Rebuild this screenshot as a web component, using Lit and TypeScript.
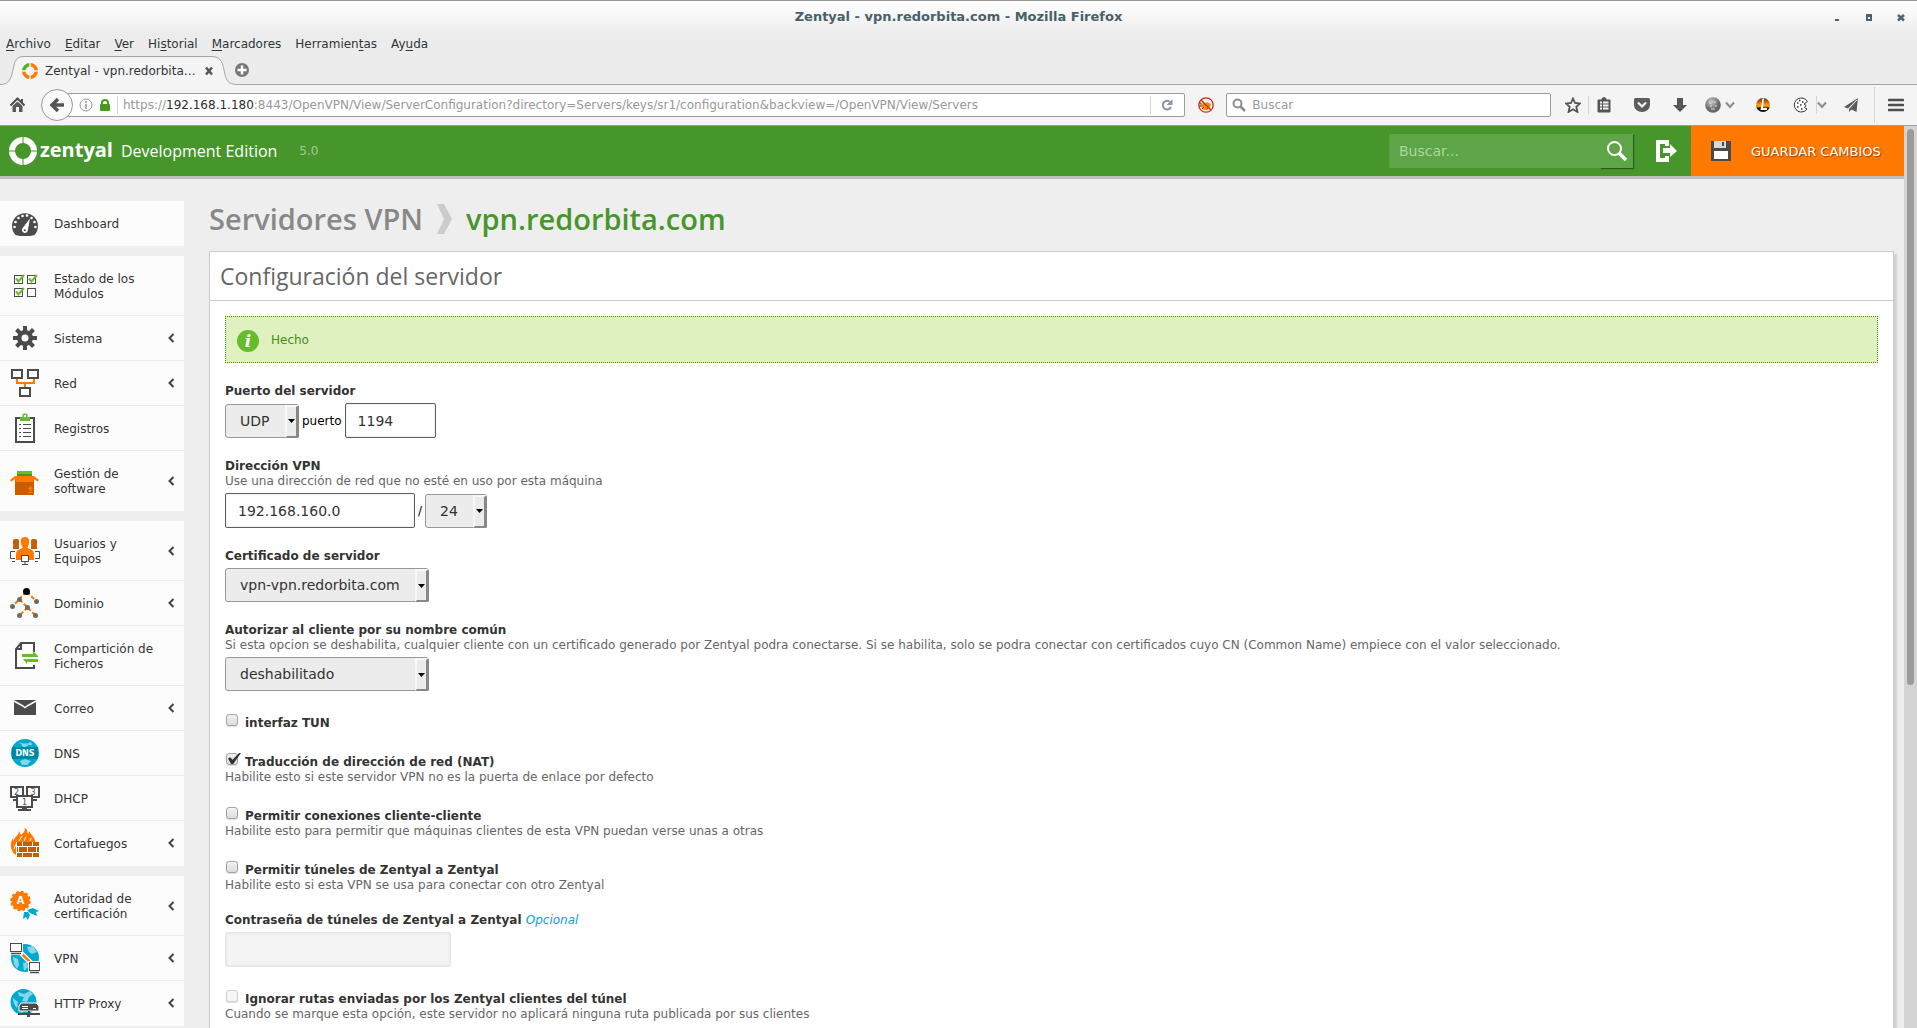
import { LitElement, html, svg, css, nothing, TemplateResult } from "lit";
import { customElement } from "lit/decorators.js";

const DARK = "#4b4b4b";
const ORANGE = "#ff7800";
const RUST = "#c65d00";
const GREEN = "#66bc29";
const CYAN = "#00a9d0";
const PALE = "#86d6ea";

/* Sidebar icons, all drawn on a 30x30 canvas. */
const icons: Record<string, TemplateResult> = {
  dashboard: svg`
    <path d="M5.500 27A13 13 0 1 1 24.500 27L20 28H10Z" fill=${DARK}/>
    <g fill="#fff">
      <circle cx="4.500" cy="19" r="1.300"/><circle cx="5.500" cy="14" r="1.300"/><circle cx="8.500" cy="10" r="1.300"/>
      <circle cx="12.500" cy="8" r="1.300"/><circle cx="17" cy="7.600" r="1.300"/><circle cx="21.500" cy="10" r="1.300"/>
      <circle cx="24.500" cy="14" r="1.300"/><circle cx="25.500" cy="19" r="1.300"/>
      <path d="M20 10.500L17.800 22.500A3 3 0 1 1 12.200 20.500Z"/>
    </g>
    <circle cx="14.900" cy="22.300" r="1" fill=${DARK}/>`,
  modules: svg`
    <g fill="none" stroke=${DARK}>
      <rect x="4.500" y="4.500" width="8" height="8"/><rect x="17.500" y="4.500" width="8" height="8"/>
      <rect x="4.500" y="17.500" width="8" height="8"/><rect x="17.500" y="17.500" width="8" height="8"/>
    </g>
    <g fill="none" stroke=${GREEN} stroke-width="2">
      <path d="M6 7.500L8.500 10.500L14 4"/><path d="M19 7.500L21.500 10.500L27 4"/><path d="M6 20.500L8.500 23.500L14 17"/>
    </g>`,
  gear: svg`
    <g stroke=${DARK} stroke-width="4">
      <path d="M15 3V27M3 15H27M6.500 6.500L23.500 23.500M23.500 6.500L6.500 23.500"/>
    </g>
    <circle cx="15" cy="15" r="8" fill=${DARK}/><circle cx="15" cy="15" r="3.500" fill="#fcfcfc"/>`,
  network: svg`
    <path d="M7 11V15H24V11M15 15V19" fill="none" stroke=${ORANGE} stroke-width="2"/>
    <g fill="#fff" stroke=${DARK} stroke-width="2">
      <rect x="2" y="2" width="10" height="8"/><rect x="18" y="2" width="10" height="8"/><rect x="10" y="20" width="10" height="8"/>
    </g>`,
  logs: svg`
    <rect x="6" y="5" width="18" height="24" fill="#fff" stroke=${DARK} stroke-width="2"/>
    <path d="M10 8V4H12.500V1.500Q15 -1 17.500 1.500V4H20V8Z" fill=${GREEN}/>
    <circle cx="15" cy="3" r="1.200" fill="#fff"/>
    <g stroke=${DARK}>
      <path d="M9 11.500H11M13 11.500H21M9 15.500H11M13 15.500H21M9 19.500H11M13 19.500H21M9 23.500H11M13 23.500H21"/>
    </g>`,
  software: svg`
    <rect x="7" y="5" width="15" height="6" fill=${GREEN}/><rect x="7" y="8" width="15" height="2" fill="#479530"/>
    <rect x="5" y="11" width="19" height="18" fill=${RUST}/>
    <path d="M5 10H24L29 14L27.500 15.500L24 13L23 16H6L5 13L1.500 15.500L0 14Z" fill=${ORANGE}/>
    <path d="M20.500 20L23.500 23H21.500V25H19.500V23H17.500ZM18 26H23V27H18Z" fill=${ORANGE}/>`,
  users: svg`
    <g fill=${RUST}>
      <path d="M4 6H8L9 11V13H3V11ZM22 6H26L27 11V13H21V11Z"/>
      <rect x="3" y="3" width="6" height="7" rx="2"/><rect x="21" y="3" width="6" height="7" rx="2"/>
    </g>
    <path d="M15 1C11 1 10.500 4 11 7C11.500 10 12.500 10.500 12.500 12L8 14Q6 15 6 19V24H24V19Q24 15 22 14L17.500 12C17.500 10.500 18.500 10 19 7C19.500 4 19 1 15 1Z" fill=${ORANGE}/>
    <g fill="#fff" stroke=${DARK}>
      <path d="M5 15.500H0.500V22.500H5M2 25.500H5"/><path d="M25 15.500H29.500V22.500H25M25 25.500H28"/>
      <rect x="11.500" y="19.500" width="7" height="6"/><path d="M12 28.500H18M15 26V28"/>
    </g>`,
  domain: svg`
    <g stroke=${ORANGE} stroke-width="2" stroke-dasharray="4 2">
      <path d="M16 4L2.500 18.500M17 4L26.500 13.500M9.500 11.500L25.500 27.500M17.500 19.500L9.500 27.500"/>
    </g>
    <circle cx="16.500" cy="3.500" r="3.500"/>
    <g fill="#6b6b6b">
      <circle cx="9.500" cy="11.500" r="2.500"/><circle cx="26.500" cy="13.500" r="2.500"/><circle cx="2.500" cy="18.500" r="2.500"/>
      <circle cx="17.500" cy="19.500" r="2.500"/><circle cx="9.500" cy="27.500" r="2.500"/><circle cx="25.500" cy="27.500" r="2.500"/>
    </g>`,
  share: svg`
    <path d="M24 11V2H11L6 8V27H24V24M11 2V8H6" fill="#fff" stroke=${DARK} stroke-width="2"/>
    <path d="M12 13H23V10L28 15V16H12ZM28 18H13L17 23V21H28Z" fill=${GREEN}/>`,
  mail: svg`
    <path d="M4 7H26V22H4Z" fill=${DARK}/>
    <path d="M4 8L12 12.500L15 14.500L18 12.500L26 8" fill="none" stroke="#fcfcfc" stroke-width="1.500"/>`,
  dns: svg`
    <circle cx="15" cy="15" r="14" fill=${CYAN}/>
    <path d="M9 4Q15 7 21 4L22 7H18L16 9H13L11 6ZM10 23L15 21L21 23L17 27H12Z" fill=${PALE}/>
    <rect x="2" y="9" width="26" height="12" fill="#0087a8"/>
    <text x="15" y="18" text-anchor="middle" font-family="DejaVu Sans" font-size="8" font-weight="bold" fill="#fff">DNS</text>`,
  dhcp: svg`
    <g fill="#fff" stroke=${DARK} stroke-width="2">
      <rect x="1" y="4" width="12" height="10"/><rect x="17" y="4" width="12" height="10"/>
      <path d="M3 17H8M22 17H27"/>
      <rect x="7" y="13" width="15" height="11"/>
    </g>
    <path d="M12 25H17V26H21V28H8V26H12Z" fill=${DARK}/>
    <g font-family="DejaVu Sans" font-size="8" fill=${DARK} text-anchor="middle">
      <text x="6.500" y="11.500">2</text><text x="23" y="11.500">3</text><text x="14.500" y="21.500">1</text>
    </g>`,
  firewall: svg`
    <path d="M4 26C0 20 0 15 3 10L3.500 13C5 8 9 7 9 3L11 7L13 5C15 3 15 2 14.500 0C18 1 17 4 18 6L20 3C20 7 26 9 25 15H7V27Z" fill=${ORANGE}/>
    <path d="M9 13L12 8M14 13L16 9M20 13L21 10M4 21L6 16" stroke="#fff"/>
    <rect x="6" y="14" width="23" height="16" fill="#fcfcfc"/>
    <path d="M7 14H12V18H7ZM13 14H22V18H13ZM23 14H29V18H23ZM7 19H8V24H7ZM9 19H17V24H9ZM18 19H26V24H18ZM27 19H29V24H27ZM7 25H12V29H7ZM13 25H22V29H13ZM23 25H29V29H23Z" fill=${RUST}/>`,
  certificate: svg`
    <path d="M17 19L23 17L29 20L26 21L27 25L20 22ZM14 21L18 21L20 24L18 29L16 26L13 28Z" fill=${CYAN}/>
    <circle cx="10.500" cy="10" r="9" fill=${ORANGE}/>
    <circle cx="10.500" cy="10" r="9" fill="none" stroke=${ORANGE} stroke-width="2.500" stroke-dasharray="2.900 1.800"/>
    <text x="10.500" y="13" text-anchor="middle" font-family="DejaVu Sans" font-size="10" font-weight="bold" fill="#fff">A</text>`,
  vpn: svg`
    <circle cx="15" cy="15" r="14" fill=${CYAN}/>
    <path d="M17 4L23 3L27 9L22 11L19 9ZM3 14L8 16L9 22L7 26Q3 21 3 14ZM13 20L17 19L18 24L14 28Z" fill=${PALE}/>
    <path d="M9 8L22 21" stroke="#fff" stroke-width="5"/><path d="M9 8L22 21" stroke=${ORANGE} stroke-width="2.500"/>
    <path d="M0 0H13V12H0ZM18 18H30V30H18Z" fill="#fcfcfc"/>
    <g fill="#fff" stroke=${DARK}>
      <rect x="0.500" y="0.500" width="11" height="8"/><rect x="19.500" y="19.500" width="10" height="8"/>
      <path d="M1 10.500H11M20 29.500H29" stroke-width="1.500"/>
    </g>`,
  proxy: svg`
    <circle cx="13.500" cy="14" r="13" fill=${CYAN}/>
    <path d="M8 4L14 6L20 3L23 6L19 9L17 14L12 13L14 9L9 8ZM3 10L8 14L7 20Q3 16 3 10ZM9 21L14 20L12 26Z" fill=${PALE}/>
    <path d="M11 15H26L29 18V23H9V18Z" fill=${DARK} stroke="#fff"/>
    <path d="M12 18.500H18M12 20.500H18M23 20.500H26" stroke="#fff"/>
    <path d="M18 23H20V25H30V27H20V29H17V27H8V25H18Z" fill=${DARK}/>`,
};

interface NavEntry { icon: string; label: string; sub?: boolean; }

const navGroups: NavEntry[][] = [
  [{ icon: "dashboard", label: "Dashboard" }],
  [
    { icon: "modules", label: "Estado de los Módulos" },
    { icon: "gear", label: "Sistema", sub: true },
    { icon: "network", label: "Red", sub: true },
    { icon: "logs", label: "Registros" },
    { icon: "software", label: "Gestión de software", sub: true },
  ],
  [
    { icon: "users", label: "Usuarios y Equipos", sub: true },
    { icon: "domain", label: "Dominio", sub: true },
    { icon: "share", label: "Compartición de Ficheros" },
    { icon: "mail", label: "Correo", sub: true },
    { icon: "dns", label: "DNS" },
    { icon: "dhcp", label: "DHCP" },
    { icon: "firewall", label: "Cortafuegos", sub: true },
  ],
  [
    { icon: "certificate", label: "Autoridad de certificación", sub: true },
    { icon: "vpn", label: "VPN", sub: true },
    { icon: "proxy", label: "HTTP Proxy", sub: true },
  ],
];

/* The four-segment ring of the Zentyal logo; the top left segment may differ in colour. */
const ring = (top: string, rest: string) => svg`
  <g fill="none" stroke-width="6">
    <path d="M15 4A11 11 0 0 1 26 15A11 11 0 0 1 15 26A11 11 0 0 1 4 15" stroke=${rest}/>
    <path d="M4 15A11 11 0 0 1 15 4" stroke=${top}/>
  </g>`;

/* ------------------------------------------------------------------ */

@customElement("browser-chrome")
class BrowserChrome extends LitElement {
  static styles = css`
    :host { display: block; font: 12px/15px "DejaVu Sans", sans-serif; color: #2f3639; }
    button { border: 0; padding: 0; margin: 0; background: none; font: inherit; color: inherit; display: flex; align-items: center; justify-content: center; }
    svg { display: block; flex: none; }
    .titlebar {
      height: 34px; box-sizing: border-box; border-top: 1px solid #979797;
      background: linear-gradient(#ffffff, #ececec);
      display: grid; grid-template-columns: 1fr auto 1fr; align-items: center;
    }
    .title { grid-column: 2; margin: 0; padding-bottom: 3px; font: bold 13px/15px "DejaVu Sans", sans-serif; color: #46606c; }
    .window-buttons { display: flex; justify-content: flex-end; gap: 16px; padding: 0 8px 2px 0; }
    .window-buttons button { width: 16px; height: 16px; }
    .menubar { background: #ececec; height: 21px; padding-left: 6px; display: flex; gap: 14px; align-items: center; }
    .menubar a { color: inherit; text-decoration: none; }
    .menubar u { text-underline-offset: 2px; }
    .tabs { background: #ececec; height: 30px; display: flex; align-items: flex-start; box-shadow: inset 0 -1px #a2a4a6; }
    .tab { position: relative; width: 232px; height: 30px; }
    .tab-shape { position: absolute; inset: 0; }
    .tab-content { position: relative; display: flex; align-items: center; height: 30px; padding: 2px 17px 0 22px; box-sizing: border-box; }
    .tab-content span { flex: 1; padding-left: 7px; white-space: nowrap; }
    .new-tab { width: 20px; height: 30px; }
    .toolbar {
      height: 41px; box-sizing: border-box; background: #f4f4f4; border-bottom: 1px solid #9f9f9f;
      display: flex; align-items: center; padding: 0 13px 0 10px;
    }
    .back {
      width: 32px; height: 32px; box-sizing: border-box; margin-left: 15px; position: relative;
      border: 1px solid #9a9a9a; border-radius: 50%; background: #fafafa;
    }
    .address, .search {
      height: 24px; box-sizing: border-box; border: 1px solid #9d9d9d; border-radius: 2px; background: #fff;
      display: flex; align-items: center; min-width: 0;
    }
    .address { flex: 7 1 0; margin-left: -8px; padding: 0 11px 0 13px; color: #989898; white-space: nowrap; overflow: hidden; }
    .address .url { flex: 1; overflow: hidden; padding-left: 5px; }
    .address b { font-weight: normal; color: #2d2d2d; }
    .rule { width: 1px; height: 18px; background: #d4d4d4; flex: none; }
    .lock { padding: 0 7px; }
    .reload { padding-left: 10px; }
    .block { padding: 0 12px 0 13px; }
    .search { flex: 2 1 0; padding: 0 5px; gap: 6px; }
    .search input { border: 0; outline: 0; padding: 0; width: 100%; background: none; font: inherit; }
    .search input::placeholder { color: #989898; opacity: 1; }
    .star { padding: 0 7px 0 14px; }
    .cell { width: 38px; height: 24px; }
    .clip { margin-left: -4px; }
    .combo { padding: 0 9px 0 6px; gap: 4px; }
    .cookie { padding: 0 7px 0 11px; }
    .drop { padding-right: 5px; }
    .burger { padding-left: 13px; }
    .tall { height: 36px; margin-left: 4px; }
  `;

  private menu = [["", "A", "rchivo"], ["", "E", "ditar"], ["", "V", "er"], ["Hi", "s", "torial"], ["", "M", "arcadores"], ["Herramien", "t", "as"], ["Ay", "u", "da"]];

  private chevron() {
    return html`<svg width="10" height="8" viewBox="0 0 10 8"><path d="M1 1.500L5 6L9 1.500" fill="none" stroke="#8b8b8b" stroke-width="2"/></svg>`;
  }

  render() {
    return html`
      <header class="titlebar">
        <h1 class="title">Zentyal - vpn.redorbita.com - Mozilla Firefox</h1>
        <div class="window-buttons">
          <button aria-label="Minimizar"><svg width="16" height="16" viewBox="0 0 16 16"><path d="M6 10H10V12H6Z" fill="#4d626d"/></svg></button>
          <button aria-label="Maximizar"><svg width="16" height="16" viewBox="0 0 16 16"><path d="M5 5H11V12H5ZM7 8V10H9V8Z" fill="#4d626d" fill-rule="evenodd"/></svg></button>
          <button aria-label="Cerrar"><svg width="16" height="16" viewBox="0 0 16 16"><path d="M5 6L11 11.500M11 6L5 11.500" stroke="#4d626d" stroke-width="2.500"/></svg></button>
        </div>
      </header>
      <nav class="menubar">${this.menu.map(([a, k, b]) => html`<a href="#">${a}<u>${k}</u>${b}</a>`)}</nav>
      <div class="tabs">
        <div class="tab">
          <svg class="tab-shape" width="240" height="30" viewBox="0 0 240 30">
            <path d="M0 30V29H1C9 29 11 24 13 15C15 5 16 1.500 25 1.500H210C220 1.500 222 5 224 15C226 25 227 29.500 238 29.500V30Z" fill="#f4f4f4"/>
            <path d="M0 29.500C9 29.500 11 24 13 15C15 5 16 1.500 25 1.500H210C220 1.500 222 5 224 15C226 25 227 29.500 238 29.500" fill="none" stroke="#a2a4a6"/>
          </svg>
          <div class="tab-content">
            <svg width="16" height="16" viewBox="1 1 28 28">${ring("#4cb81f", "#ff7800")}<path d="M15 0V30M0 15H30" stroke="#f4f4f4" stroke-width="2.500"/></svg>
            <span>Zentyal - vpn.redorbita…</span>
            <button aria-label="Cerrar pestaña"><svg width="11" height="10" viewBox="0 0 11 10"><path d="M2 1.500L8 8.500M8 1.500L2 8.500" stroke="#555" stroke-width="2.500"/></svg></button>
          </div>
        </div>
        <button class="new-tab" aria-label="Nueva pestaña">
          <svg width="16" height="16" viewBox="0 0 16 16"><circle cx="8" cy="8" r="7" fill="#777"/><path d="M8 3.500V12.500M3.500 8H12.500" stroke="#fff" stroke-width="2.500"/></svg>
        </button>
      </div>
      <div class="toolbar">
        <button aria-label="Inicio"><svg width="16" height="16" viewBox="0 0 16 16">
          <path d="M0.500 8.500L7.500 1.500L14.500 8.500" fill="none" stroke="#4d4d4d" stroke-width="2"/><path d="M11 2H13V6L11 4Z" fill="#4d4d4d"/>
          <path d="M2.500 9L7.500 4.500L12.500 9V15H9V10H6V15H2.500Z" fill="#5a5a5a"/></svg></button>
        <button class="back" aria-label="Atrás"><svg width="16" height="16" viewBox="0 0 16 16"><path d="M15 8H4M9 2L3 8L9 14" fill="none" stroke="#555" stroke-width="3.500"/></svg></button>
        <div class="address">
          <svg width="14" height="14" viewBox="0 0 14 14"><circle cx="7" cy="7" r="6" fill="none" stroke="#909090"/><path d="M7 3V5M7 6V11" stroke="#909090" stroke-width="1.500"/></svg>
          <svg class="lock" width="10" height="12" viewBox="0 0 10 12"><path d="M2 6V4A3 3 0 0 1 8 4V6" fill="none" stroke="#479a1c" stroke-width="2"/><rect y="5" width="10" height="7" rx="1" fill="#479a1c"/></svg>
          <span class="rule"></span>
          <span class="url">https://<b>192.168.1.180</b>:8443/OpenVPN/View/ServerConfiguration?directory=Servers/keys/sr1/configuration&amp;backview=/OpenVPN/View/Servers</span>
          <span class="rule"></span>
          <button class="reload" aria-label="Recargar"><svg width="12" height="12" viewBox="0 0 12 12"><path d="M10 8A4.300 4.300 0 1 1 8.500 2.500" fill="none" stroke="#8595a5" stroke-width="2"/><path d="M11.500 0V6H5.500Z" fill="#8595a5"/></svg></button>
        </div>
        <button class="block" aria-label="Bloqueador"><svg width="16" height="16" viewBox="0 0 16 16">
          <circle cx="8" cy="8" r="7.200" fill="#f3eded" stroke="#cf2a20" stroke-width="1.300"/>
          <path d="M3 9L5 6L7 7L9 5L13 7L12 10L9 13H7L4 12Z" fill="#f08a00"/><path d="M1 6H3V9H1M4 12L6 10M9 12L11 10" stroke="#7a4a10" fill="none"/>
          <path d="M3 3L13 13" stroke="#cf2a20" stroke-width="1.500"/></svg></button>
        <label class="search">
          <svg width="14" height="14" viewBox="0 0 14 14"><circle cx="5.500" cy="5.500" r="4" fill="none" stroke="#8c8c8c" stroke-width="2"/><path d="M8.500 8.500L13 13" stroke="#8c8c8c" stroke-width="2.500"/></svg>
          <input type="text" placeholder="Buscar" aria-label="Buscar en la web">
        </label>
        <button class="star" aria-label="Marcador"><svg width="16" height="16" viewBox="0 0 16 16"><path d="M8 1.500L10 6L15 6.500L11.300 9.800L12.500 15L8 12.300L3.500 15L4.700 9.800L1 6.500L6 6Z" fill="none" stroke="#555" stroke-width="1.800"/></svg></button>
        <span class="rule"></span>
        <button class="cell clip" aria-label="Lista"><svg width="16" height="16" viewBox="0 0 16 16"><path d="M6 3V1.500L8 0.500L10 1.500V3H14V15H2V3Z" fill="#555" stroke="#555" stroke-linejoin="round"/><path d="M4 5.500H6M7 5.500H12.500M4 8.500H6M7 8.500H12.500M4 11.500H6M7 11.500H12.500" stroke="#f4f4f4" stroke-width="1.800"/></svg></button>
        <button class="cell" aria-label="Pocket"><svg width="16" height="16" viewBox="0 0 16 16"><path d="M1.500 1H14.500Q16 1 16 2.500V8A8 7 0 0 1 0 8V2.500Q0 1 1.500 1Z" fill="#5d5d5d"/><path d="M4 5.500L8 9.500L12 5.500" fill="none" stroke="#f4f4f4" stroke-width="2.200"/></svg></button>
        <button class="cell" aria-label="Descargas"><svg width="16" height="16" viewBox="0 0 16 16"><path d="M5 1H11V8H15L8 15L1 8H5Z" fill="#555"/></svg></button>
        <button class="combo" aria-label="Complemento">
          <svg width="16" height="16" viewBox="0 0 16 16"><defs><radialGradient id="ball" cx="0.4" cy="0.3"><stop offset="0" stop-color="#ccc"/><stop offset="1" stop-color="#666"/></radialGradient></defs><circle cx="8" cy="8" r="7.800" fill="url(#ball)"/><path d="M4 6H6M9 5H11M5 9H7M10 9H12M6 12H10" stroke="#e3e3e3"/></svg>
          ${this.chevron()}
        </button>
        <button class="cell" aria-label="Complemento L"><svg width="16" height="16" viewBox="0 0 16 16"><defs><linearGradient id="amber" x2="0" y2="1"><stop offset="0" stop-color="#6b3400"/><stop offset="0.500" stop-color="#ff9a1a"/><stop offset="0.650" stop-color="#f08000"/><stop offset="0.700" stop-color="#111"/></linearGradient></defs><circle cx="8" cy="8" r="7" fill="url(#amber)"/><path d="M7.500 1.500H9L8 11H12V13H5.500Z" fill="#fff"/></svg></button>
        <button class="cookie" aria-label="Cookies"><svg width="16" height="16" viewBox="0 0 16 16"><path d="M10 1.200A7 7 0 1 0 14 12L11.500 10.500L13 8.500L11 7L14.500 4.500Q13 2 10 1.200Z" fill="#fff" stroke="#333"/><path d="M6 3.500H7.500M9 5H10.500M4 6H5.500M7 8H8.500M4 10H5.500M8 12H9.500" stroke="#333" stroke-width="1.500"/></svg></button>
        <span class="rule"></span>
        <button class="drop" aria-label="Más cookies">${this.chevron()}</button>
        <button class="cell" aria-label="Enviar"><svg width="16" height="16" viewBox="0 0 16 16"><path d="M15 1L1 10L5 11.500ZM15 1L6 12V15L8.500 12.500L13.500 15Z" fill="#5b5b5b"/><path d="M14 3L6 11.500" stroke="#ddd"/></svg></button>
        <span class="rule tall"></span>
        <button class="burger" aria-label="Menú"><svg width="16" height="16" viewBox="0 0 16 16"><path d="M1 3H15M1 8H15M1 13H15" stroke="#4d4d4d" stroke-width="2.600" stroke-linecap="round"/></svg></button>
      </div>`;
  }
}

/* ------------------------------------------------------------------ */

@customElement("zentyal-header")
class ZentyalHeader extends LitElement {
  static styles = css`
    :host { display: flex; height: 50px; background: #46962b; border-bottom: 3px solid #bdbdbd; color: #fff; font: 12px/15px "DejaVu Sans", sans-serif; }
    button { border: 0; padding: 0; background: none; color: inherit; font: inherit; display: flex; align-items: center; justify-content: center; }
    svg { display: block; flex: none; }
    .brand { display: flex; align-items: center; padding-left: 8px; flex: 1; color: inherit; text-decoration: none; }
    .name { font: bold 20px/30px "Open Sans", sans-serif; padding: 0 8px 3px 2px; }
    .edition { font: 16px/24px "Open Sans", sans-serif; }
    .version { padding-left: 22px; color: #a3cb95; }
    form { display: flex; align-self: center; height: 34px; width: 244px; background: #5da546; }
    form input { flex: 1; min-width: 0; border: 0; outline: 0; background: none; padding: 0 10px; font: 14px/20px "DejaVu Sans", sans-serif; color: #fff; }
    form input::placeholder { color: #b0d4a4; opacity: 1; }
    form button { width: 33px; background: #5da546; box-shadow: 1px 1px 1px #2a5e18; }
    .exit { padding: 0 14px 0 23px; }
    .save { background: #ff7800; width: 213px; gap: 20px; padding-left: 20px; justify-content: flex-start; font-size: 13px; }
    .save span { text-shadow: 1px 1px 1px #8a4000; }
  `;

  render() {
    return html`
      <a class="brand" href="#">
        <svg width="30" height="30" viewBox="0 0 30 30">${ring("#fff", "#fff")}<path d="M15 0V30M0 15H30" stroke="#46962b"/></svg>
        <span class="name">zentyal</span><span class="edition">Development Edition</span><span class="version">5.0</span>
      </a>
      <form @submit=${(e: Event) => e.preventDefault()}>
        <input type="text" placeholder="Buscar..." aria-label="Buscar">
        <button aria-label="Buscar"><svg width="22" height="22" viewBox="0 0 22 22"><circle cx="8.500" cy="8.500" r="6.500" fill="none" stroke="#fff" stroke-width="2"/><path d="M13 13L20 20" stroke="#fff" stroke-width="3.500"/></svg></button>
      </form>
      <button class="exit" aria-label="Salir"><svg width="21" height="22" viewBox="0 0 21 22"><path d="M0 0H13V6H9V4H4V18H9V16H13V22H0ZM7 8H14V4L21 11L14 17V13H7Z" fill="#fff"/></svg></button>
      <button class="save">
        <svg width="20" height="20" viewBox="0 0 20 20"><path d="M0 0H20V20H0Z" fill="#4a4a4a"/><path d="M3 0H15V7H3Z" fill="#d8d8d8"/><path d="M11 1H13V5H11Z" fill="#4a4a4a"/><path d="M3 10H17V18H3Z" fill="#fff"/></svg>
        <span>GUARDAR CAMBIOS</span>
      </button>`;
  }
}

/* ------------------------------------------------------------------ */

@customElement("side-menu")
class SideMenu extends LitElement {
  static styles = css`
    :host { display: block; font: 12px/15px "DejaVu Sans", sans-serif; }
    ul { list-style: none; margin: 0 0 10px; padding: 0 0 1px; background: #fcfcfc; }
    li + li { border-top: 1px solid #ececec; }
    a {
      display: flex; align-items: center; min-height: 44px; padding: 0 10px; box-sizing: border-box;
      color: #333; text-decoration: none;
    }
    a.two { min-height: 59px; }
    .icon { flex: none; display: block; overflow: visible; }
    .label { flex: 1; padding: 2px 8px 0 14px; }
    .two .label { padding-right: 20px; }
    .arrow { flex: none; }
  `;

  render() {
    return navGroups.map((group) => html`
      <ul>${group.map((e) => html`
        <li><a href="#" class=${e.label.length > 15 ? "two" : ""}>
          <svg class="icon" width="30" height="30" viewBox="0 0 30 30">${icons[e.icon]}</svg>
          <span class="label">${e.label}</span>
          ${e.sub ? html`<svg class="arrow" width="6" height="10" viewBox="0 0 6 10"><path d="M5.500 1L1.500 5L5.500 9" fill="none" stroke="#444" stroke-width="2"/></svg>` : nothing}
        </a></li>`)}
      </ul>`);
  }
}

/* ------------------------------------------------------------------ */

@customElement("server-form")
class ServerForm extends LitElement {
  static styles = css`
    :host { display: block; font: 12px/15px "DejaVu Sans", sans-serif; color: #000; }
    form { display: flex; flex-direction: column; gap: 20px; }
    .label { display: block; font-weight: bold; color: #333; }
    .hint { display: block; margin: 0; color: #666; }
    .optional { font-weight: normal; color: #00a9d0; }
    .controls { display: flex; align-items: center; gap: 3px; padding: 4px 0 1px; }
    .controls > label { padding-top: 2px; }
    .text {
      box-sizing: border-box; height: 35px; margin: 0; padding: 0 12px; border: 1px solid #5e5e5e; border-radius: 2px;
      font: 14px/20px "DejaVu Sans", sans-serif; color: #333; background: #fff; box-shadow: inset 0 0 3px #ddd;
    }
    .text:disabled { background: #f4f4f4; border-color: #e6e6e6; }
    .port { width: 91px; }
    .address { width: 190px; }
    .secret { width: 226px; }
    .drop { position: relative; display: flex; }
    .drop select {
      appearance: none; box-sizing: border-box; height: 34px; margin: 0; padding: 0 28px 0 14px;
      border: 1px solid #989898; border-radius: 3px; background: #ececec; color: #333;
      font: 14px/20px "DejaVu Sans", sans-serif;
    }
    .knob {
      position: absolute; top: 1px; right: 0; bottom: 0; width: 14px; box-sizing: border-box; pointer-events: none;
      border: 2px solid #f8f8f8; border-right: 3px solid #888; border-bottom-color: #888; border-radius: 0 2px 2px 0; background: #ececec;
      display: flex; align-items: center; justify-content: center;
    }
    .tick { display: flex; align-items: flex-start; gap: 7px; padding: 2px 0 0 1px; }
    .tick .label { padding-top: 2px; }
    .tick input {
      appearance: none; position: relative; box-sizing: border-box; width: 12px; height: 12px; margin: 0;
      border: 1px solid #a3a3a3; border-radius: 3px; background: linear-gradient(#f2f2f2, #dcdcdc); box-shadow: 0 1px 1px #ddd;
    }
    .tick input:disabled { border-color: #cfcfcf; background: #f6f6f6; }
    .tick input:checked::after {
      content: ""; position: absolute; left: 1px; top: -1px; width: 13px; height: 11px; background: #2e3436;
      clip-path: polygon(0 50%, 16% 38%, 35% 62%, 85% 0, 100% 0, 40% 100%, 24% 100%);
    }
  `;

  private select(id: string, options: string[]) {
    return html`<span class="drop">
      <select id=${id}>${options.map((o) => html`<option>${o}</option>`)}</select>
      <span class="knob"><svg width="7" height="4" viewBox="0 0 7 4"><path d="M0 0H7L3.500 4Z"/></svg></span>
    </span>`;
  }

  private tick(id: string, label: string, hint = "", checked = false, disabled = false) {
    return html`<div>
      <div class="tick">
        <input type="checkbox" id=${id} ?checked=${checked} ?disabled=${disabled}>
        <label class="label" for=${id}>${label}</label>
      </div>
      ${hint ? html`<p class="hint">${hint}</p>` : nothing}
    </div>`;
  }

  render() {
    return html`<form>
      <div>
        <label class="label" for="protocol">Puerto del servidor</label>
        <div class="controls">${this.select("protocol", ["UDP", "TCP"])}<label for="port">puerto</label>
          <input class="text port" id="port" type="text" value="1194"></div>
      </div>
      <div>
        <label class="label" for="network">Dirección VPN</label>
        <p class="hint">Use una dirección de red que no esté en uso por esta máquina</p>
        <div class="controls"><input class="text address" id="network" type="text" value="192.168.160.0">
          <label for="mask">/</label>${this.select("mask", ["24", "16"])}</div>
      </div>
      <div>
        <label class="label" for="certificate">Certificado de servidor</label>
        <div class="controls">${this.select("certificate", ["vpn-vpn.redorbita.com"])}</div>
      </div>
      <div>
        <label class="label" for="common">Autorizar al cliente por su nombre común</label>
        <p class="hint">Si esta opcion se deshabilita, cualquier cliente con un certificado generado por Zentyal podra conectarse. Si se habilita, solo se podra conectar con certificados cuyo CN (Common Name) empiece con el valor seleccionado.</p>
        <div class="controls">${this.select("common", ["deshabilitado", "vpn-vpn.redorbita.com"])}</div>
      </div>
      ${this.tick("tun", "interfaz TUN")}
      ${this.tick("nat", "Traducción de dirección de red (NAT)", "Habilite esto si este servidor VPN no es la puerta de enlace por defecto", true)}
      ${this.tick("c2c", "Permitir conexiones cliente-cliente", "Habilite esto para permitir que máquinas clientes de esta VPN puedan verse unas a otras")}
      ${this.tick("z2z", "Permitir túneles de Zentyal a Zentyal", "Habilite esto si esta VPN se usa para conectar con otro Zentyal")}
      <div>
        <label class="label" for="secret">Contraseña de túneles de Zentyal a Zentyal <em class="optional">Opcional</em></label>
        <div class="controls"><input class="text secret" id="secret" type="password" disabled></div>
      </div>
      ${this.tick("routes", "Ignorar rutas enviadas por los Zentyal clientes del túnel", "Cuando se marque esta opción, este servidor no aplicará ninguna ruta publicada por sus clientes", false, true)}
    </form>`;
  }
}

/* ------------------------------------------------------------------ */

@customElement("app-root")
class AppRoot extends LitElement {
  static styles = css`
    :host { display: flex; flex-direction: column; height: 100vh; overflow: hidden; background: #eee; }
    .viewport { flex: 1; min-height: 0; display: flex; }
    .page { flex: 1; min-width: 0; overflow: hidden; }
    .columns { display: grid; grid-template-columns: 184px minmax(0, 1fr); padding-top: 22px; }
    main { padding: 0 10px 0 25px; }
    .crumbs { display: flex; align-items: center; gap: 14px; height: 36px; margin: 0 0 14px; font: 600 29px/36px "Open Sans", sans-serif; color: #888; }
    .crumbs a { color: inherit; text-decoration: none; }
    .crumbs strong { font-weight: 600; color: #46962b; }
    .card { background: #fff; border: 1px solid #ccc; box-shadow: 3px 3px 2px #d0d0d0; padding-bottom: 20px; }
    .card h2 { margin: 0; padding: 0 10px; height: 48px; border-bottom: 1px solid #ccc; font: 23px/48px "Open Sans", sans-serif; color: #666; }
    .body { padding: 15px; }
    .note {
      display: flex; align-items: center; gap: 12px; height: 47px; box-sizing: border-box; margin-bottom: 21px; padding: 2px 11px 0;
      border: 1px dotted #468b17; background: #e0f1c0; color: #468b17; font: 12px/15px "DejaVu Sans", sans-serif;
    }
    .scrollbar { width: 13px; box-sizing: border-box; padding: 3px; background: #d4d4d4; }
    .thumb { height: 62%; border-radius: 4px; background: #9b9b9c; }
  `;

  render() {
    return html`
      <browser-chrome></browser-chrome>
      <div class="viewport">
        <div class="page">
          <zentyal-header></zentyal-header>
          <div class="columns">
            <side-menu></side-menu>
            <main>
              <nav class="crumbs">
                <a href="#">Servidores VPN</a>
                <svg width="15" height="30" viewBox="0 0 15 30"><path d="M0 0H7L15 15L7 30H0L7 15Z" fill="#ccc"/></svg>
                <strong>vpn.redorbita.com</strong>
              </nav>
              <section class="card">
                <h2>Configuración del servidor</h2>
                <div class="body">
                  <div class="note">
                    <svg width="22" height="22" viewBox="0 0 22 22"><circle cx="11" cy="11" r="11" fill="#66bc29"/><text x="11" y="17" text-anchor="middle" font-family="DejaVu Serif" font-size="17" font-style="italic" font-weight="bold" fill="#fff">i</text></svg>
                    <span>Hecho</span>
                  </div>
                  <server-form></server-form>
                </div>
              </section>
            </main>
          </div>
        </div>
        <div class="scrollbar"><div class="thumb"></div></div>
      </div>`;
  }
}
